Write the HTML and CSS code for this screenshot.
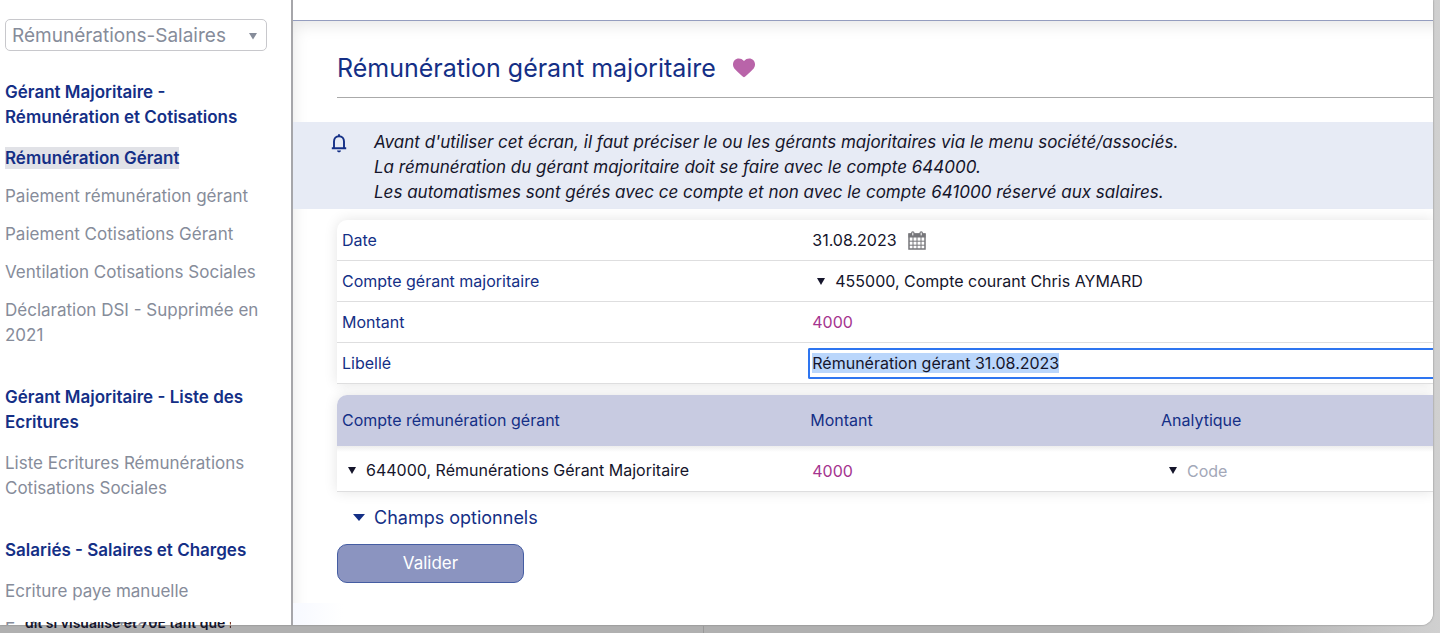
FILE: index.html
```html
<!DOCTYPE html>
<html lang="fr">
<head>
<meta charset="utf-8">
<meta name="viewport" content="width=device-width, initial-scale=1">
<title>Rémunération gérant majoritaire</title>
<link rel="stylesheet" href="styles.css">
</head>
<body>
<div class="window">
  <aside class="sidebar">
    <div class="module">
      <select class="module-select" aria-label="Module"><option>Rémunérations-Salaires</option></select>
      <svg class="module-arrow" viewBox="0 0 10 8" aria-hidden="true"><path d="M1 1h8L5 7.500z"/></svg>
    </div>
    <nav class="nav">
      <section class="group">
        <h2 class="group-title">Gérant Majoritaire - Rémunération et Cotisations</h2>
        <a class="link" href="#"><span class="current">Rémunération Gérant</span></a>
        <a class="link" href="#">Paiement rémunération gérant</a>
        <a class="link" href="#">Paiement Cotisations Gérant</a>
        <a class="link" href="#">Ventilation Cotisations Sociales</a>
        <a class="link" href="#">Déclaration DSI - Supprimée en 2021</a>
      </section>
      <section class="group">
        <h2 class="group-title">Gérant Majoritaire - Liste des Ecritures</h2>
        <a class="link" href="#">Liste Ecritures Rémunérations Cotisations Sociales</a>
      </section>
      <section class="group">
        <h2 class="group-title">Salariés - Salaires et Charges</h2>
        <a class="link" href="#">Ecriture paye manuelle</a>
        <a class="link" href="#">Ecriture paye TESE</a>
      </section>
    </nav>
  </aside>
  <main class="main">
    <div class="topbar"></div>
    <div class="panel">
      <header class="heading">
        <h1 class="title">Rémunération gérant majoritaire</h1>
        <svg class="heart" viewBox="0 0 22 20" aria-hidden="true"><path d="M11 19.300C10.500 19.300 2.500 12 1.300 10.500C-.6 8-.4 4.200 1.600 2.200C4-.2 8.300-.1 11 3C13.700-.1 18-.2 20.400 2.200C22.400 4.200 22.600 8 20.700 10.500C19.500 12 11.500 19.300 11 19.300z"/></svg>
      </header>
      <div class="notice">
        <svg class="bell" viewBox="0 0 16 20" aria-hidden="true"><path d="M8 1.200v2M3 15V8.500C3 5.500 5 3.200 8 3.200s5 2.300 5 5.300V15M.8 15.300h14.400" fill="none" stroke="currentColor" stroke-width="1.900"/><path d="M6 17.500h4c0 2.400-4 2.400-4 0z" fill="currentColor"/></svg>
        <p class="notice-text">Avant d'utiliser cet écran, il faut préciser le ou les gérants majoritaires via le menu société/associés.<br>La rémunération du gérant majoritaire doit se faire avec le compte 644000.<br>Les automatismes sont gérés avec ce compte et non avec le compte 641000 réservé aux salaires.</p>
      </div>
      <form class="form">
        <div class="card">
          <div class="row">
            <label for="date">Date</label>
            <div class="cell"><input class="field date" id="date" type="text" value="31.08.2023">
              <button class="calendar" type="button" aria-label="Choisir une date"><svg viewBox="0 0 18 19" aria-hidden="true"><path d="M1 3h16v15H1z" fill="#fff" stroke="#77777b" stroke-width="1.500"/><path d="M.5 2.500h17v4H.5z" fill="#77777b"/><path d="M5 6v12M9 6v12M13 6v12M1 10.200h16M1 14.200h16" stroke="#77777b"/><path d="M4.800 2v2M13.200 2v2" stroke="#77777b" stroke-width="3.500" stroke-linecap="round"/><path d="M4.800 2v2M13.200 2v2" stroke="#fff" stroke-width="1" stroke-linecap="round"/></svg></button>
            </div>
          </div>
          <div class="row">
            <label for="account">Compte gérant majoritaire</label>
            <div class="cell combo"><svg class="arrow" viewBox="0 0 8 7" aria-hidden="true"><path d="M0 0h8L4 7z"/></svg><select class="field" id="account"><option>455000, Compte courant Chris AYMARD</option></select></div>
          </div>
          <div class="row">
            <label for="amount">Montant</label>
            <div class="cell"><input class="field amount" id="amount" type="text" value="4000"></div>
          </div>
          <div class="row">
            <label for="label">Libellé</label>
            <div class="cell"><input class="field active" id="label" type="text" value="Rémunération gérant 31.08.2023"></div>
          </div>
        </div>
        <table class="lines">
          <thead><tr><th class="col-account" scope="col">Compte rémunération gérant</th><th class="col-amount" scope="col">Montant</th><th scope="col">Analytique</th></tr></thead>
          <tbody><tr>
            <td><div class="combo"><svg class="arrow" viewBox="0 0 8 7" aria-hidden="true"><path d="M0 0h8L4 7z"/></svg><select class="field" aria-label="Compte rémunération gérant"><option>644000, Rémunérations Gérant Majoritaire</option></select></div></td>
            <td><input class="field amount" type="text" value="4000" aria-label="Montant de la ligne"></td>
            <td><div class="combo"><svg class="arrow" viewBox="0 0 8 7" aria-hidden="true"><path d="M0 0h8L4 7z"/></svg><input class="field" type="text" placeholder="Code" aria-label="Analytique"></div></td>
          </tr></tbody>
        </table>
        <button class="toggle" type="button"><svg class="toggle-arrow" viewBox="0 0 12 7" aria-hidden="true"><path d="M0 0h12L6 7z"/></svg>Champs optionnels</button>
        <button class="submit" type="button">Valider</button>
      </form>
    </div>
  </main>
</div>
<div class="backdrop-line" aria-hidden="true"></div>
<p class="backdrop-text">dit si visualisé et 70E tant que !</p>
<script src="script.js"></script>
</body>
</html>
```
FILE: styles.css
```css
* { box-sizing: border-box; }
body {
  margin: 0;
  padding: 0 7px 8px 0;
  height: 100vh;
  overflow: hidden;
  background: linear-gradient(90deg, #b0b0b0 85%, #d0d0d0);
  font: 16px/25px Inter, "Open Sans", sans-serif;
  color: #15152b;
}
h1, h2, p { margin: 0; font-weight: 400; }
button, input, select { font: inherit; color: inherit; }
.window {
  display: flex;
  height: 100%;
  overflow: hidden;
  background: #fff;
  border-radius: 0 0 12px 0;
  box-shadow: 0 0 2px #777;
}
.sidebar {
  flex: 0 0 293px;
  padding: 19px 24px 0 5px;
  border-right: 2px solid #a6a6aa;
  overflow: hidden;
}
.module { position: relative; height: 32px; }
.module-select {
  appearance: none;
  width: 100%;
  height: 32px;
  padding: 0 24px 0 6px;
  border: 1px solid #c8c8cc;
  border-radius: 5px;
  background: #fff;
  color: #868c9a;
  font-size: 19px;
}
.module-arrow { position: absolute; right: 9px; top: 13px; width: 10px; height: 8px; fill: #868c9a; pointer-events: none; }
.nav { display: flex; flex-direction: column; gap: 37px; padding-top: 29px; margin-right: -8px; font-size: 17px; }
.group { display: flex; flex-direction: column; gap: 13px; }
.group-title { margin-bottom: 3px; font-size: 17px; font-weight: 600; color: #142f86; }
.link { color: #868c9a; text-decoration: none; }
.current { padding: 1px 0; background: #e1e2e7; color: #142f86; font-weight: 600; }
.main { flex: 1; min-width: 0; display: flex; flex-direction: column; background: linear-gradient(90deg, #f7f9ff, #fff 50px); }
.topbar { flex: none; height: 21px; border-bottom: 1px solid #949dbf; background: #fff; }
.panel { padding-bottom: 20px; background: #fff; box-shadow: inset 8px 12px 16px -8px #e6e6e6; }
.heading {
  display: flex;
  align-items: center;
  gap: 17px;
  height: 77px;
  margin: 0 0 24px 44px;
  padding-top: 18px;
  border-bottom: 1px solid #aaa;
}
.title { font-size: 25px; line-height: 32px; color: #142f86; }
.heart { width: 22px; height: 20px; fill: #b964a9; }
.notice { display: flex; align-items: flex-start; gap: 27px; padding: 8px 0 4px 38px; background: #e7ebf5; }
.bell { flex: none; width: 16px; height: 20px; margin-top: 3px; color: #142f86; }
.notice-text { font-size: 17px; font-style: italic; }
.form { padding: 11px 0 0 44px; }
.card { border-radius: 10px 0 0 0; background: #fff; box-shadow: 0 0 14px #e4e4e4; }
.row { display: grid; grid-template-columns: 43% 1fr; align-items: center; height: 41px; border-bottom: 1px solid #dededf; }
.row label { padding-left: 5px; color: #142f86; }
.cell { display: flex; align-items: center; }
.field {
  appearance: none;
  min-width: 0;
  width: 100%;
  height: 31px;
  padding: 0 4px;
  border: 0;
  background: transparent;
  outline: 0;
}
.field::placeholder { color: #a3a8b8; opacity: 1; }
.date { width: 94px; }
.amount { color: #a5348f; }
.active { padding: 0 2px; border: 2px solid #2e75f0; border-right: 0; border-radius: 2px 0 0 2px; }
.active::selection { background: #bad6fb; color: #15152b; }
.calendar { width: 18px; height: 19px; margin-left: 6px; padding: 0; border: 0; background: none; }
.calendar svg { display: block; width: 18px; height: 19px; }
.combo { display: flex; align-items: center; gap: 6px; padding-left: 9px; }
.arrow { flex: none; width: 8px; height: 7px; fill: #15152b; }
.lines { width: 100%; margin-top: 11px; border-collapse: separate; border-spacing: 0; table-layout: fixed; box-shadow: 0 0 14px #e4e4e4; border-radius: 10px 0 0 0; }
.lines th { height: 51px; padding: 0 0 0 5px; background: #c8cbe1; color: #142f86; font-weight: 400; text-align: left; }
.lines th + th { padding-left: 2px; }
.lines th:first-child { border-radius: 10px 0 0 0; }
.col-account { width: 43%; }
.col-amount { width: 32%; }
.lines td { height: 46px; padding: 4px 0 0; border-bottom: 1px solid #dededf; background: linear-gradient(#ededed, #fff 6px); }
.lines .combo { padding-left: 11px; }
.lines td:last-child .combo { padding-left: 10px; }
.toggle { display: flex; align-items: center; gap: 9px; height: 26px; margin: 12px 0 14px; padding: 0 0 0 16px; border: 0; background: none; color: #142f86; font-size: 18px; }
.toggle-arrow { width: 12px; height: 7px; fill: #142f86; }
.submit { display: block; width: 187px; height: 39px; border: 1px solid #455da2; border-radius: 10px; background: #8b94c0; color: #fff; font-size: 17px; }
.backdrop-line { position: absolute; left: 703px; bottom: 0; width: 1px; height: 7px; background: #999; }
.backdrop-text { position: absolute; left: 25px; bottom: 3px; width: 206px; height: 8px; overflow: hidden; display: flex; align-items: flex-end; font-size: 14px; line-height: 15px; font-weight: 600; white-space: nowrap; }
```
FILE: script.js
```js
const label = document.getElementById("label");
label.focus();
label.select();
```
